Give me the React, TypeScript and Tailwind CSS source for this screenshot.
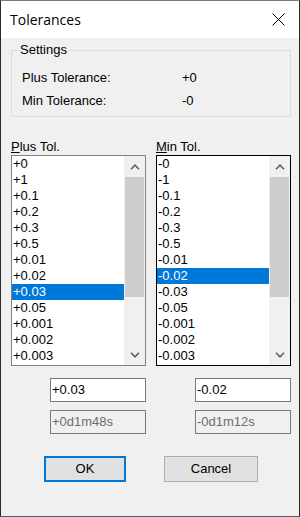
import React from "react";

const plusItems = ["+0", "+1", "+0.1", "+0.2", "+0.3", "+0.5", "+0.01", "+0.02", "+0.03", "+0.05", "+0.001", "+0.002", "+0.003"];
const minItems = ["-0", "-1", "-0.1", "-0.2", "-0.3", "-0.5", "-0.01", "-0.02", "-0.03", "-0.05", "-0.001", "-0.002", "-0.003"];

function Chevron({ down }: { down?: boolean }) {
  return (
    <svg width="10" height="6" viewBox="0 0 10 6" className={down ? "rotate-180" : ""}>
      <polyline points="1,5.2 5,1.2 9,5.2" fill="none" stroke="#606060" strokeWidth="1.6" />
    </svg>
  );
}

function ListBox({ items, selected, focused }: { items: string[]; selected: number; focused?: boolean }) {
  return (
    <div className={`h-[211px] flex border bg-white ${focused ? "border-[#000000]" : "border-[#828282]"}`}>
      <div className="w-[112px] flex flex-col">
        {items.map((item, i) => (
          <div
            key={item}
            className={`h-[16px] leading-[16px] pl-[1px] ${i === selected ? "bg-[#0078d7] text-white" : "text-black"}`}
          >
            {item}
          </div>
        ))}
      </div>
      {/* scrollbar */}
      <div className="w-[21px] bg-[#f0f0f0] flex flex-col">
        <div className="h-[21px] flex items-center justify-center">
          <Chevron />
        </div>
        <div className="h-[120px] mx-[1px] bg-[#cdcdcd]" />
        <div className="flex-1" />
        <div className="h-[21px] flex items-center justify-center">
          <Chevron down />
        </div>
      </div>
    </div>
  );
}

export default function App() {
  return (
    <div className="w-[300px] h-[517px] flex flex-col bg-[#f0f0f0] border border-[#5a5a5a] border-l-[#2b2b2b] border-r-[#2b2b2b] border-t-[#7a7a7a] font-['Liberation_Sans',Arial,sans-serif] text-[13px] leading-[16px] text-black">
      {/* Title bar */}
      <div className="h-[37px] bg-white flex items-center justify-between pl-[9px] pr-[14px]">
        <span className="font-['Open_Sans',sans-serif] text-[14px] text-black">Tolerances</span>
        <svg width="13" height="13" viewBox="0 0 13 13">
          <line x1="0.5" y1="0.5" x2="12.5" y2="12.5" stroke="#000" strokeWidth="1" />
          <line x1="12.5" y1="0.5" x2="0.5" y2="12.5" stroke="#000" strokeWidth="1" />
        </svg>
      </div>

      <div className="flex-1 flex flex-col pt-[4px] pl-[10px] pr-[8px]">
        {/* Settings group */}
        <fieldset className="w-[280px] border border-[#dcdcdc] pt-[12px] pb-[7px]">
          <legend className="ml-[6px] px-[2px] h-[16px] leading-[16px]">Settings</legend>
          <div className="flex flex-col gap-[7px] pl-[10px]">
            <div className="flex">
              <span className="w-[160px]">Plus Tolerance:</span>
              <span>+0</span>
            </div>
            <div className="flex">
              <span className="w-[160px]">Min Tolerance:</span>
              <span>-0</span>
            </div>
          </div>
        </fieldset>

        {/* Lists */}
        <div className="mt-[22px] flex gap-[10px]">
          <div className="w-[135px] flex flex-col">
            <div className="h-[16px]">
              <span className="underline underline-offset-[1px]">P</span>lus Tol.
            </div>
            <ListBox items={plusItems} selected={8} />
            <div className="mt-[12px] flex flex-col items-end gap-[8px]">
              <div className="w-[96px] h-[24px] border border-[#7a7a7a] bg-white leading-[22px] pl-[1px]">+0.03</div>
              <div className="w-[96px] h-[24px] border border-[#7a7a7a] bg-[#f0f0f0] text-[#6d6d6d] leading-[22px] pl-[1px]">+0d1m48s</div>
            </div>
          </div>
          <div className="w-[135px] flex flex-col">
            <div className="h-[16px]">
              <span className="underline underline-offset-[1px]">M</span>in Tol.
            </div>
            <ListBox items={minItems} selected={7} focused />
            <div className="mt-[12px] flex flex-col items-end gap-[8px]">
              <div className="w-[96px] h-[24px] border border-[#7a7a7a] bg-white leading-[22px] pl-[1px]">-0.02</div>
              <div className="w-[96px] h-[24px] border border-[#7a7a7a] bg-[#f0f0f0] text-[#6d6d6d] leading-[22px] pl-[1px]">-0d1m12s</div>
            </div>
          </div>
        </div>

        {/* Buttons */}
        <div className="mt-[22px] flex">
          <button className="ml-[33px] w-[82px] h-[26px] border-2 border-[#0078d7] bg-[#e1e1e1] text-black">OK</button>
          <button className="ml-[38px] w-[94px] h-[26px] border border-[#adadad] bg-[#e1e1e1] text-black">Cancel</button>
        </div>
      </div>
    </div>
  );
}
